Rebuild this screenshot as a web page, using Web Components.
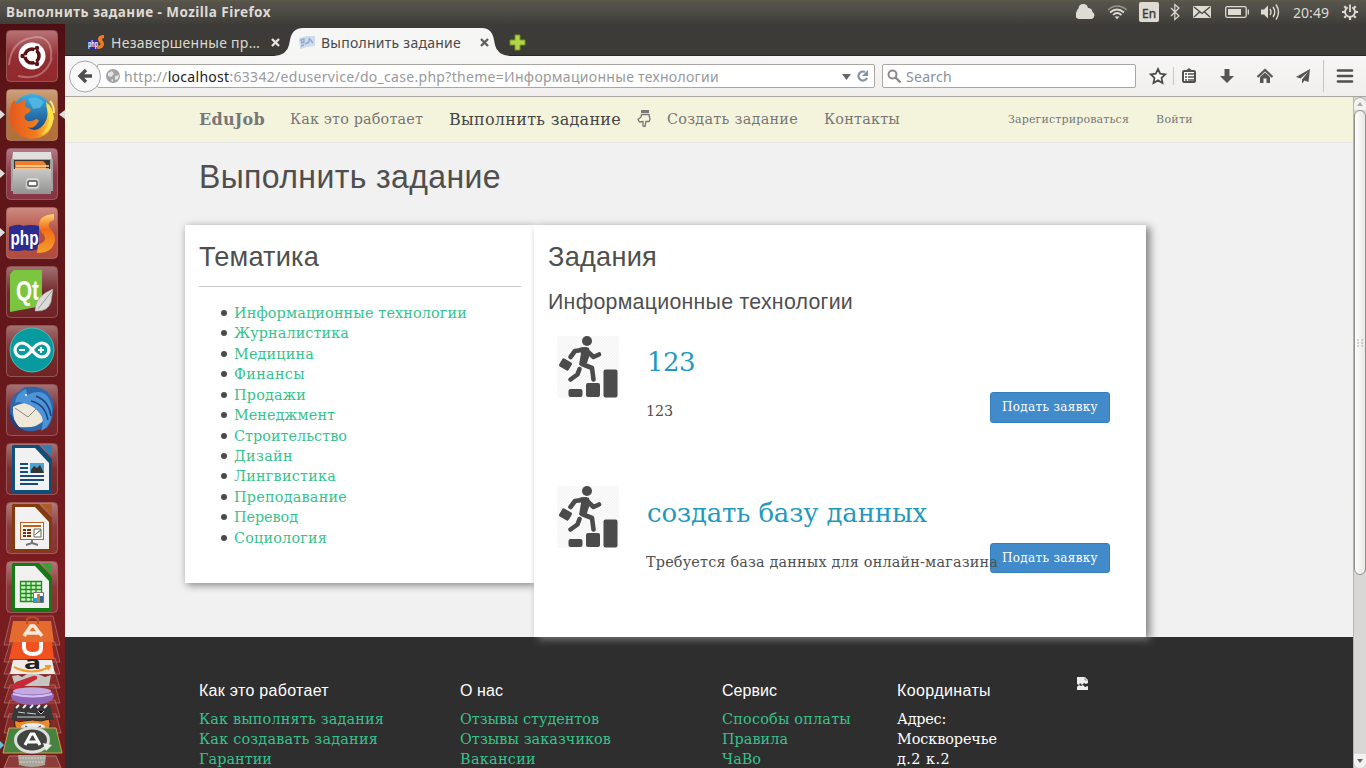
<!DOCTYPE html>
<html lang="ru">
<head>
<meta charset="utf-8">
<title>Выполнить задание</title>
<style>
html,body{margin:0;height:100%;overflow:hidden;background:#f1f1f1}
</style>
</head>
<body>
<desk-screen></desk-screen>
<script>
const define=(name,html,setup)=>customElements.define(name,class extends HTMLElement{
  connectedCallback(){
    if(this.shadowRoot)return;
    const t=document.createElement('template');
    t.innerHTML=typeof html==='function'?html(this):html;
    this.attachShadow({mode:'open'}).append(t.content.cloneNode(true));
    if(setup)setup(this);
  }
});

define('desk-screen',`<style>
:host{display:grid;width:1366px;height:768px;grid-template:24px 744px/65px 1301px;font-family:"Noto Sans",sans-serif;overflow:hidden}
system-bar{grid-column:1/3}
</style><system-bar></system-bar><app-launcher></app-launcher><browser-window></browser-window>`);

define('system-bar',`<style>
:host{display:flex;align-items:center;height:24px;background:linear-gradient(#5e5b4c 0,#56534a 2px,#504e48 40%,#3f3d38);color:#dfdbd2;font-size:14px;box-sizing:border-box;padding-left:6px}
.title{font-weight:700;font-size:13.5px}
svg{display:block;margin-left:auto}
.clock{margin:0 13px 0 11px}
.gear{margin:0 8px 0 0}
</style>
<fit-text class="title" w="265">Выполнить задание - Mozilla Firefox</fit-text>
<svg width="206" height="24" viewBox="1076 0 206 24" fill="none" stroke="#dfdbd2" stroke-width="1.3">
<path d="M1079.500 19a4 4 0 0 1-3-7 4.500 4.500 0 0 1 2-3.500 4.800 4.800 0 0 1 9.500-.5 4.600 4.600 0 0 1 4.500 4 3.800 3.800 0 0 1-1 7z" fill="#dfdbd2" stroke="none"/>
<path d="M1108 10Q1117 2 1127 10" opacity=".5"/><path d="M1110 12.500q7-6 14 0M1113 15q4-4 8.500 0" stroke-width="1.700"/><path d="M1114.500 16.500h5l-2.500 2.700z" fill="#dfdbd2" stroke="none"/>
<rect x="1139" y="2" width="20" height="20" rx="2" fill="#dfdbd2" stroke="none"/>
<text x="1142" y="17.500" textLength="14" lengthAdjust="spacingAndGlyphs" font-size="13" fill="#3c3b37" stroke="#3c3b37" stroke-width=".4" font-family="Noto Sans">En</text>
<path d="M1171 8l8 8-4.200 3.500v-15l4.200 3.500-8 8" stroke-width="1.200"/>
<rect x="1193" y="6" width="18" height="12" rx="1" fill="#dfdbd2" stroke="none"/><path d="M1194 7l8 6.500 8-6.500M1194 17l5.500-5M1210 17l-5.500-5" stroke="#47453f" stroke-width="1.300"/>
<rect x="1225.700" y="6.700" width="20.500" height="10.600" rx="1.500"/><rect x="1228" y="9" width="13" height="6" fill="#dfdbd2" stroke="none"/><path d="M1248.300 9.500v5"/>
<path d="M1261 9.500h3l4-4v13l-4-4h-3z" fill="#dfdbd2" stroke="none"/><path d="M1270 9q2 3 0 6M1273 7q3.600 5 0 10M1276 4.500q5 7.500 0 15" stroke-width="1.400"/>
</svg>
<fit-text class="clock" w="36">20:49</fit-text>
<svg class="gear" width="16" height="16" viewBox="-8 -8 16 16" fill="none" stroke="#dfdbd2"><path d="M-2.300-4.600a5 5 0 1 0 4.600 0" stroke-width="1.900"/><path d="M0-7.500V0" stroke-width="1.800"/><path d="M4 4l1.700 1.700M-4 4l-1.700 1.700M5 0h3M-5 0h-3M0 5v3M-4-4l-1.700-1.700M4-4l1.700-1.700" stroke-width="2.200"/></svg>`);

const sheet=(dark,light)=>`<path d="M6 3.500q0-1.500 1.500-1.500H33l13 14v32.500q0 1.500-1.500 1.500h-37Q6 50 6 48.500z" fill="${dark}"/><path d="M35 2h9.500q1.500 0 1.500 1.500V13.500z" fill="${light}"/><path d="M9 5h20l14 15v27H9z" fill="#f1f1f1"/>`;
const glyph={
ubuntu:`<g fill="none" stroke="#fff" stroke-opacity=".3" stroke-width="2"><path d="M3 35q2-26 28-28 16 1 14 22M12 46q26 6 34-18"/></g><circle cx="26" cy="26" r="13.500" fill="#fff"/><circle cx="26" cy="26" r="7" fill="none" stroke="#5b1217" stroke-width="3.600"/><path d="M26 26L13 26M26 26l7-12M26 26l7 12" stroke="#fff" stroke-width="1.600"/><g fill="#5b1217"><circle cx="16.500" cy="26" r="2.200"/><circle cx="31" cy="18" r="2.200"/><circle cx="31" cy="34" r="2.200"/></g><circle cx="26" cy="26" r="5" fill="#fff"/>`,
firefox:`<circle cx="26" cy="25" r="20" fill="url(#ffb)"/><path d="M22 10q8-4 16 3l-4 6-7 1z" fill="#5dc0ea" opacity=".7"/><path d="M4 22q1-9 5-11 0 2 2 4 4-4 9-4-2 3-1 7l6 2q-1 4-5 5-3 3 0 6 4 3 10-1 4 1 2 3-4 8-11 5 9 7 17-3 6-8 2-19 8 7 6 20-4 13-21 14Q8 47 4 32z" fill="url(#ffo)"/><path d="M40 13q7 5 8 16-2 12-13 17 9-9 8-17z" fill="#ffe14a"/><path d="M44 12q4 4 4 12" stroke="#ffe36a" stroke-width="2" fill="none"/>`,
files:`<path d="M7 4h38l1 9H6z" fill="#dfdfdd"/><path d="M5 11h42v32H5z" fill="#a3a3a1"/><path d="M8 12h36v12H8z" fill="#34322f"/><path d="M9 13h28l3 3v7H9z" fill="#ef7c29"/><path d="M10 18h33M9 21h34" stroke="#ffd6a4" stroke-width="1.500"/><path d="M7 21h38v25H7z" fill="url(#metal)"/><rect x="20" y="30" width="13" height="11" rx="2.500" fill="#ddd" stroke="#bdbdbd"/><rect x="22" y="33" width="9" height="5" rx="1" fill="#fff" stroke="#4d4d4d" stroke-width="1.400"/>`,
php:`<path d="M3 20q10-4 14-1 8-2 16 0v23q-8 3-14 1-8 2-16 0z" fill="#2b2c8e"/><text x="4.500" y="37.500" font-family="Liberation Sans" font-size="21" font-weight="700" fill="#fff" textLength="28" lengthAdjust="spacingAndGlyphs">php</text><path d="M48 7Q33 8 33 18q0 5 5 10 4 6-6 10l-1 8q17 0 18-14 0-6-6-12-2-5 5-7z" fill="url(#sun)"/>`,
qt:`<path d="M4 8l4-4h28v36l-32 6z" fill="#7cc63f"/><text x="10" y="34" font-family="Liberation Sans" font-size="28" font-weight="700" fill="#fff" textLength="23" lengthAdjust="spacingAndGlyphs">Qt</text><path d="M47 23q-18 7-18 22 13 1 16-9z" fill="#dadad8" stroke="#999" stroke-width=".6"/><path d="M46 25L32 43" stroke="#999"/>`,
arduino:`<circle cx="26" cy="25" r="22" fill="#079ba0" stroke="#4bbcbf"/><path d="M26 25q-5-7-10-7a7 7 0 0 0 0 14q5 0 10-7 5-7 10-7a7 7 0 0 1 0 14q-5 0-10-7z" fill="none" stroke="#fff" stroke-width="3.200"/><path d="M13 25h6M32 25h6M35 22v6" stroke="#fff" stroke-width="1.800"/>`,
bird:`<path d="M4 28Q4 11 14 7q4-5 8-4 20-2 25 15 2 17-6 26l-9 2q-12 4-20-4Q3 37 4 28z" fill="#2c69ab"/><path d="M7 23q11-6 23-4l8 17q-7 9-25 7-7-7-6-20z" fill="#eee8da"/><path d="M9 24l13 9 12-12" fill="none" stroke="#8d877d"/><path d="M9 19q1-10 11-14l1 6q14-7 21 2 6 10 3 22-3 9-10 12 3-7 1-14-7-13-24-15z" fill="#4c94d6"/><path d="M25 17q14 3 17 19M30 12q13 5 15 20M10 43q-5-5-6-13 6 12 12 17z" fill="none" stroke="#1a4380" stroke-width="1.500"/><circle cx="20" cy="11" r="1" fill="#fff"/>`,
writer:sheet('#0f507b','#2a81b9')+`<path d="M14 21h8M14 25h8M14 29h8M14 33h24M14 37h24M14 41h18" stroke="#174d77" stroke-width="1.800"/><path d="M24 20h14v10H24z" fill="#4ba3d2"/><path d="M25 30v-3l3-4 3 2 3-3 4 8z" fill="#333"/>`,
impress:sheet('#833b0d','#af5b24')+`<rect x="14.500" y="20.500" width="23" height="17" fill="#fff8ed" stroke="#b96027"/><path d="M17 24h18" stroke="#be602b" stroke-width="2"/><path d="M17 28h3M17 31h3M17 34h3M21 28h4M21 31h4M21 34h4" stroke="#792f17" stroke-width="2"/><path d="M28 27h7v8h-7z" fill="#fff" stroke="#666"/><path d="M29 33l3-3 3-2" stroke="#29912e"/><path d="M26 37v4l-6 2M26 41l6 2" fill="none" stroke="#777" stroke-width="2"/>`,
calc:sheet('#137b13','#38a238')+`<path d="M14 20h22v21H14z" fill="#d1f2c9"/><path d="M14.500 20.500h21v20h-21zM14 24.500h22M14 28.500h22M14 32.500h22M14 36.500h22M20 20v21M25 20v21M30 20v21" fill="none" stroke="#199117" stroke-width="1.300"/><path d="M27.500 31.500h10v10h-10z" fill="#fff" stroke="#777"/><path d="M28 37h3v4h-3z" fill="#17a6df"/><path d="M31 33h3v8h-3z" fill="#df782b"/><path d="M34 35h3v6h-3z" fill="#246c9b"/>`};

define('launcher-item',el=>`<style>:host{display:block;width:65px;height:59px}svg{display:block;width:65px;height:59px}</style>
<svg viewBox="0 0 65 59"><defs>
<linearGradient id="ffb" x2="0" y2="1"><stop stop-color="#3ab0e3"/><stop offset="1" stop-color="#153d7a"/></linearGradient>
<linearGradient id="ffo"><stop stop-color="#e4591d"/><stop offset=".6" stop-color="#f17a20"/><stop offset="1" stop-color="#ffd83e"/></linearGradient>
<linearGradient id="metal" x2="0" y2="1"><stop stop-color="#c8c8c6"/><stop offset="1" stop-color="#939391"/></linearGradient>
<linearGradient id="sun" x2="0" y2="1"><stop stop-color="#ffd071"/><stop offset=".4" stop-color="#f36c18"/><stop offset="1" stop-color="#f5a229"/></linearGradient>
<linearGradient id="sheen" x2="0" y2="1"><stop stop-color="#fff" stop-opacity=".36"/><stop offset=".5" stop-color="#fff" stop-opacity=".05"/><stop offset="1" stop-color="#fff" stop-opacity=".02"/></linearGradient></defs>
<rect x="6.500" y=".5" width="51" height="51" rx="4" fill="${el.getAttribute('tint')}" stroke="#fff" stroke-opacity=".25"/><rect x="7" y="1" width="50" height="50" rx="4" fill="url(#sheen)"/>
<g transform="translate(6 0)">${glyph[el.getAttribute('icon')]}</g>
${el.hasAttribute('run')?'<path d="M0 21l5 4.500-5 4.500z" fill="#ddd"/>':''}${el.hasAttribute('focused')?'<path d="M65 21l-6 4.500 6 4.500z" fill="#ddd"/>':''}</svg>`);

define('launcher-stack',`<style>:host{display:block}svg{display:block}</style>
<svg width="65" height="153" viewBox="0 615 65 153">
<g fill="#a23b35" fill-opacity=".45" stroke="#fff" stroke-opacity=".25"><path d="M11 616h42l7 29H4z"/><path d="M10 642h45l5 20H4z"/><path d="M10 658h45l5 16H4z"/><path d="M10 672h45l5 16H4z"/><path d="M10 685h45l5 18H4z"/><path d="M10 700h45l5 17H4z"/><path d="M9 714h47l5 19H4z"/></g>
<path d="M13 621h38l3 21H9z" fill="#e36b2f"/><path d="M27 624v-5q5-4 11 0v5" fill="none" stroke="#c04e21" stroke-width="2"/><path d="M24 636l7-10h3l8 10M26 633h14" fill="none" stroke="#f9e8dc" stroke-width="3.500"/>
<path d="M13 642h39l2 17H9z" fill="#ef511f"/><path d="M24 642v6q1 6 9 6t8-6v-6" fill="none" stroke="#fff" stroke-width="4"/>
<path d="M13 660h39l3 14H10z" fill="#ececea"/><text x="24" y="669" font-family="Noto Sans" font-weight="700" font-size="17" fill="#222" textLength="17" lengthAdjust="spacingAndGlyphs">a</text><path d="M14 667q18 9 35 0M45 666h5l-2 4" fill="none" stroke="#f49a28" stroke-width="2"/>
<path d="M12 676l6-1 4 2 5-3h11l7 3 6-2-2 11H15z" fill="#c5c5c2"/><path d="M11 688l5-6 17-6q5-1 4 3L17 690z" fill="#c7293a"/>
<ellipse cx="32.500" cy="696" rx="21.500" ry="9" fill="#9168b8"/><ellipse cx="32" cy="691" rx="19" ry="3.500" fill="#c3aadf"/><path d="M13 694q20 5 39 0" stroke="#d5bdf0" fill="none" stroke-width="2"/>
<path d="M15 705h35l4 15H11z" fill="#36383a"/><path d="M16 708l3-3M23 708l3-3M30 708l3-3M37 708l3-3M44 708l3-3" stroke="#eee" stroke-width="2"/><path d="M18 712l7 1M27 713l9 1M38 711l3 3 3-3M17 717h28" stroke="#ccc"/>
<path d="M15 720q5 3 8 1 10-2 18 0l8-2q4 10-5 13-11 5-24 0-7-5-5-12z" fill="#ea8b2e" stroke="#222"/><ellipse cx="33" cy="727" rx="12" ry="4" fill="#eee"/><path d="M25 726q8 5 16 0" fill="none" stroke="#333"/>
<path d="M9 728h47l6 25H3z" fill="#478340" stroke="#d79a54"/><ellipse cx="32" cy="740" rx="16.500" ry="12" fill="#41443f" stroke="#ddd" stroke-width="3"/><path d="M25 745l6-11h3l6 11M27 742h11" fill="none" stroke="#fff" stroke-width="3"/><path d="M43 743l9 2-6 6z" fill="#eee"/>
<path d="M9 756h47l5 12H4z" fill="#a55a53" fill-opacity=".55" stroke="#b7736b"/><path d="M18 755h28l-1 10q-13 4-26 0z" fill="#aaa79d"/><path d="M19 758h26M20 762h24" stroke="#d5d4ca" stroke-dasharray="2 1"/>
<path d="M0 741l4 4-4 4z" fill="#63bddd"/></svg>`);

define('app-launcher',`<style>:host{display:flex;flex-direction:column;height:744px;overflow:hidden;background:linear-gradient(#4e0e12,#5d1517 8%,#63171a 40%,#7b1d20 75%,#6d1c1c);padding-top:6px;box-sizing:border-box}
launcher-stack{margin-top:-5px}</style>
<launcher-item icon="ubuntu" tint="#8f2428"></launcher-item><launcher-item icon="firefox" tint="#b06c35" run focused></launcher-item><launcher-item icon="files" tint="#853040" run></launcher-item><launcher-item icon="php" tint="#b0483a" run></launcher-item><launcher-item icon="qt" tint="#6c2022"></launcher-item><launcher-item icon="arduino" tint="#702020"></launcher-item><launcher-item icon="bird" tint="#712027"></launcher-item><launcher-item icon="writer" tint="#732427"></launcher-item><launcher-item icon="impress" tint="#853031"></launcher-item><launcher-item icon="calc" tint="#842d2e"></launcher-item><launcher-stack></launcher-stack>`);

define('browser-window',`<style>:host{display:grid;grid-template:32px 41px 671px/1288px 13px}tab-strip,tool-bar{grid-column:1/3}</style>
<tab-strip></tab-strip><tool-bar></tool-bar><edu-page></edu-page><scroll-track></scroll-track>`);

define('tab-strip',`<style>
:host{display:flex;height:32px;background:#3c3b37;box-shadow:inset 0 -1px #292825;font-size:14px}
.old{display:flex;align-items:center;width:215px;padding:4px 0 0 23px;box-sizing:border-box;color:#dcd8cf}
.old fit-text{margin:0 11px 0 7px}
.tab{display:grid;width:226px;height:32px}
.tab>*{grid-area:1/1}
.face{display:flex;align-items:center;padding:4px 0 0 19px;color:#4a4a4a}
.face fit-text{margin:0 19px 0 6px}
.plus{margin:10px 0 0 3px}
</style>
<div class="old"><svg width="16" height="16"><path d="M0 6h10v9H0z" fill="#2a2fa0"/><text x="0" y="13" font-family="Liberation Sans" font-size="9" font-weight="700" fill="#fff" textLength="10" lengthAdjust="spacingAndGlyphs">php</text><path d="M16 1q-6 0-6 4 0 2 2 4t-3 3v3q7 0 7-5 0-2-2-4 0-2 2-2z" fill="#f17b20"/></svg>
<fit-text w="149">Незавершенные пр…</fit-text><svg width="9" height="9"><path d="M1 1l7 7M8 1L1 8" stroke="#e8e4dc" stroke-width="2.400"/></svg></div>
<div class="tab"><svg width="236" height="32" style="overflow:visible"><path d="M-6 32Q7 31 9 21l1-5Q12 4 23 4H202q10 0 12 12l1 5q2 10 15 11z" fill="#f6f6f5"/></svg>
<div class="face"><svg width="16" height="14"><path d="M0 3l8-2 8 0v10l-8 1-7 2z" fill="#cddbea"/><path d="M2 5l3-1v3l-2 1zM6 9l4-2V4M10 3l4 5M2 11l3-1" fill="none" stroke="#8fabd2" stroke-width="1.400"/></svg>
<fit-text w="140">Выполнить задание</fit-text><svg width="9" height="9"><path d="M1 1l7 7M8 1L1 8" stroke="#606060" stroke-width="2.400"/></svg></div></div>
<svg class="plus" width="18" height="17"><path d="M6 1h5v5h5v5h-5v5H6v-5H1V6h5z" fill="#b4d645" stroke="#71952b"/></svg>`);

define('tool-bar',`<style>
:host{display:flex;align-items:center;height:41px;background:linear-gradient(#f6f6f5,#f1efee);border-bottom:1px solid #aaa7a2;box-sizing:border-box;font-size:14px;color:#999}
.back{z-index:1;margin-left:4px}
.box{display:flex;align-items:center;height:24px;box-sizing:border-box;border:1px solid #aaa7a3;border-radius:2px;background:#fff}
.url{width:778px;margin-left:-5px;padding-left:8px}
.url fit-text{margin-left:4px}
b{font-weight:400;color:#222}
.drop{margin-left:123px}
.search{margin-left:7px;width:254px;padding-left:4px}
.search fit-text{margin-left:4px;color:#888f98}
.icons{margin-left:8px}
</style>
<svg class="back" width="33" height="33"><circle cx="16" cy="16.500" r="15.500" fill="#f8f8f8" stroke="#a2a8ad"/><path d="M17 10l-6 6 6 6M11.500 16H23" fill="none" stroke="#4e4e4e" stroke-width="3.400"/></svg>
<div class="box url"><svg width="14" height="14"><circle cx="7" cy="7" r="7" fill="#a3a3a3"/><path d="M2 4l4-2 2 3-3 3-3-1zM9 7l4-1-1 4-3 1zM5 11l2-1v3z" fill="#e4e4e4"/></svg><fit-text w="595">http://<b>localhost</b>:63342/eduservice/do_case.php?theme=Информационные технологии</fit-text>
<svg class="drop" width="32" height="14"><path d="M0 5h9l-4.500 6z" fill="#666"/><path d="M23 3a4.500 4.500 0 1 0 2 6" fill="none" stroke="#8393a5" stroke-width="2.200"/><path d="M26 1v6h-6z" fill="#8393a5"/></svg></div>
<div class="box search"><svg width="15" height="15"><circle cx="5.500" cy="5.500" r="4" fill="none" stroke="#8a8a8a" stroke-width="2"/><path d="M8.500 8.500l5 5" stroke="#8a8a8a" stroke-width="2.400"/></svg><fit-text w="46">Search</fit-text></div>
<svg class="icons" width="222" height="40" viewBox="1144 56 222 40" fill="#555">
<path d="M1158 69l2.200 4.700 5 .6-3.700 3.500 1 5.200-4.500-2.600-4.500 2.600 1-5.200-3.700-3.500 5-.6z" fill="#fff" stroke="#4c4c4c" stroke-width="1.800"/>
<path d="M1173.500 67v18" stroke="#c0c7cf"/>
<rect x="1183" y="71" width="12" height="11" rx="1" fill="#fff" stroke="#505050" stroke-width="2"/><path d="M1185 71l4-3 4 3z"/><path d="M1185 74h2M1188 74h6M1185 77h2M1188 77h6M1185 80h2M1188 80h6" stroke="#505050" stroke-width="1.300"/>
<path d="M1224.500 69h5v7h4.500l-7 7-7-7h4.500z"/>
<path d="M1257.500 77l7.500-7 7.500 7" fill="none" stroke="#555" stroke-width="2.200"/><path d="M1260 77l5-4.500 5 4.500v6h-3.500v-4.500h-3v4.500h-3.500z"/>
<path d="M1310 69l-14 8 4.500 1.500L1308 72l-6 7.500v4l2.500-3 4 1.500z"/>
<path d="M1323.500 60v32" stroke="#bdc5ce"/><path d="M1338 70.500h14M1338 76h14M1338 81.500h14" stroke="#505050" stroke-width="2.700" stroke-linecap="round"/></svg>`);

define('scroll-track',`<style>:host{display:flex;flex-direction:column;height:671px;background:#d9d7d5;border-left:1px solid #b8b5b2;box-sizing:border-box;overflow:hidden}
.up,.down{height:16px;background:#f3f2f1;display:flex;justify-content:center;align-items:center;border-radius:0 0 6px 6px}
.up{height:13px;border-radius:6px 6px 0 0;box-shadow:inset 0 1px #aaa}
.thumb{height:465px;box-sizing:border-box;border:1px solid #93908c;border-radius:6px;background:linear-gradient(90deg,#fff,#e8e7e5);display:flex;align-items:center;justify-content:center}
.down{margin-top:auto;height:14px}
</style><div class="up"><svg width="6" height="4"><path d="M0 4l3-4 3 4z" fill="#aaa"/></svg></div><div class="thumb"><svg width="6" height="8"><path d="M0 1h2M4 1h2M0 4h2M4 4h2M0 7h2M4 7h2" stroke="#aaa"/></svg></div><div class="down"><svg width="6" height="4"><path d="M0 0h6L3 4z" fill="#666"/></svg></div>`);

define('edu-page',`<style>
:host{display:block;width:1288px;height:671px;overflow:hidden;background:#f1f1f1;color:#4f4f4f;font-family:"DejaVu Serif",serif}
h1{margin:0;height:82px;padding:14px 0 0 134px;box-sizing:border-box;font:400 33px/40px "Liberation Sans",sans-serif}
.cols{display:flex;align-items:flex-start;height:412px;padding-left:120px;position:relative;z-index:1}
theme-list{box-shadow:2px 2px 8px #808080}
task-list{box-shadow:4px 2px 8px #808080;clip-path:inset(-10px -16px -16px -4px)}
</style><edu-nav></edu-nav><h1><fit-text w="302" squeeze=".97">Выполнить задание</fit-text></h1>
<div class="cols"><theme-list></theme-list><task-list></task-list></div><edu-footer></edu-footer>`);

define('edu-nav',`<style>:host{display:flex;align-items:center;height:46px;box-sizing:border-box;border-bottom:1px solid #e6e6e6;background:#f4f4dc;padding:0 0 1px 134px;font-size:14.400px;color:#777}
.small{font-size:11px;position:relative;top:.5px}
</style><fit-text w="66" style="font-weight:700;font-size:16px">EduJob</fit-text><fit-text w="133" style="margin-left:25px">Как это работает</fit-text><fit-text w="172" style="margin:0 16px 0 26px;font-size:16px;color:#444">Выполнить задание</fit-text>
<svg width="14" height="18" viewBox="0 0 14 18"><path d="M4 0h8v3H4z" fill="#777"/><path d="M4.500 4.500h7.500l1 5-1 2H9L8 16.500 6 16V11.500l-3.500.500-1.500-2.500L4 7z" fill="none" stroke="#777" stroke-width="1.300"/></svg>
<fit-text w="131" style="margin:0 26px 0 16px">Создать задание</fit-text><fit-text w="76">Контакты</fit-text><fit-text class="small" w="121" style="margin:0 27px 0 108px">Зарегистрироваться</fit-text><fit-text class="small" w="37">Войти</fit-text>`);

define('theme-list',()=>`<style>:host{display:block;width:349px;height:358px;box-sizing:border-box;background:#fff;padding:12px 13px 0 14px}
h2{margin:0;height:50px;box-sizing:border-box;border-bottom:1px solid #c8c8c8;font:400 28px/40px "Liberation Sans",sans-serif}
ul{margin:15.800px 0 0;padding:0;list-style:none;font-size:14.400px}
li{display:flex;align-items:center;height:20.430px}
li::before{content:"";width:6px;height:6px;margin:0 7px 0 22px;border-radius:50%;background:#4b4b4b}
a{color:#37c28d}
</style><h2><fit-text w="120" squeeze=".97">Тематика</fit-text></h2><ul>${[['Информационные технологии',233],['Журналистика',115],['Медицина',80],['Финансы',71],['Продажи',72],['Менеджмент',101],['Строительство',113],['Дизайн',59],['Лингвистика',102],['Преподавание',113],['Перевод',64],['Социология',93]].map(([t,w])=>`<li><a><fit-text w="${w}">${t}</fit-text></a></li>`).join('')}</ul>`);

define('task-list',`<style>:host{display:block;width:612px;height:412px;box-sizing:border-box;background:#fff;padding:12px 14px 0}
h2{margin:0;font:400 28px/40px "Liberation Sans",sans-serif}
h3{margin:9px 0 0;height:50px;font:400 22px/32px "Liberation Sans",sans-serif}
</style><h2><fit-text w="109" squeeze=".97">Задания</fit-text></h2><h3><fit-text w="305" squeeze=".97">Информационные технологии</fit-text></h3>
<task-card tw="48" dw="27" heading="123" text="123"></task-card><task-card tw="280" dw="352" heading="создать базу данных" text="Требуется база данных для онлайн-магазина"></task-card>`);

define('task-card',el=>`<style>:host{display:grid;grid-template:50px 50px/98px 344px 120px;height:150.500px}
svg{grid-area:1/1/3/2;margin:-.3px 0 0 9px}
.t{grid-area:1/2/2/4;font-size:26px;line-height:34px;color:#2299bd;padding:9px 0 0 1px}
.d{grid-area:2/2/3/4;z-index:1;font-size:14.400px;line-height:20px;padding-top:15px}
button{grid-area:2/3/3/4;margin:6px 0 0;width:120px;height:30.500px;padding:0;border:1px solid #357ebd;border-radius:3px;background:#428bca;color:#fff;font:12px "DejaVu Serif",serif}
</style><svg width="62" height="62" viewBox="0 0 62 62"><defs><pattern id="hatch" width="3" height="3" patternUnits="userSpaceOnUse"><path d="M0 3L3 0" stroke="#ededed" stroke-width=".6"/></pattern></defs><rect width="62" height="62" fill="#fbfbfb"/><rect width="62" height="62" fill="url(#hatch)"/>
<g fill="#4b4b4b"><circle cx="30" cy="5" r="5"/><rect x="11.500" y="53" width="14" height="8" rx="2"/><rect x="29" y="47" width="14" height="14" rx="2"/><rect x="46.500" y="33.500" width="14" height="28" rx="2"/><rect x="3" y="24" width="11" height="9" rx="1.500" transform="rotate(30 8.500 28.500)"/><path d="M22 12q6-2 10 0l1 6-3 9-8 2 2-12z"/></g><g fill="none" stroke="#4b4b4b" stroke-width="4.600" stroke-linecap="round" stroke-linejoin="round"><path d="M25 14l-7 1-4.500 6M29 14l7.500 7 5.500-2.500M25 28l10 4 1.500 11.500M22.500 33l-2 5.500-7 5"/></g></svg>
<div class="t"><fit-text w="${el.getAttribute('tw')}">${el.getAttribute('heading')}</fit-text></div><button><fit-text w="96">Подать заявку</fit-text></button><div class="d"><fit-text w="${el.getAttribute('dw')}">${el.getAttribute('text')}</fit-text></div>`);

define('edu-footer',`<style>:host{display:grid;grid-template-columns:261px 262px 175px 180px 30px;height:131px;box-sizing:border-box;background:#2e2e2e;padding:40px 0 0 134px;overflow:hidden}
svg{display:block}</style>
<footer-column items="Как выполнять задания:185|Как создавать задания:179|Гарантии:73"><fit-text w="130">Как это работает</fit-text></footer-column>
<footer-column items="Отзывы студентов:139|Отзывы заказчиков:151|Вакансии:76"><fit-text w="43">О нас</fit-text></footer-column>
<footer-column items="Способы оплаты:129|Правила:66|ЧаВо:39"><fit-text w="55">Сервис</fit-text></footer-column>
<footer-column plain items="Адрес;:49|Москворечье:100|д.2 к.2:53"><fit-text w="94">Координаты</fit-text></footer-column>
<svg width="11" height="13"><path d="M0 0h8l3 3v3l-2 1-2-1-2 2-2-2-1 2-2-1zM0 10l2-2 2 1 2-1 2 2 3-1v4H0z" fill="#eee"/><path d="M8 0v3h3" fill="none" stroke="#999"/></svg>`);

define('footer-column',el=>`<style>:host{display:block;color:#fff;font-size:14.400px}
h4{margin:0;height:32px;font:400 16px/27px "Liberation Sans",sans-serif}
div{height:20px;line-height:20px;color:${el.hasAttribute('plain')?'#fff':'#37c28d'}}
</style><h4><slot></slot></h4>${el.getAttribute('items').split('|').map(s=>{const[t,w]=s.split(':');return`<div><fit-text w="${w}">${t.replace(';',':')}</fit-text></div>`}).join('')}`);

/* Tracks its text so that the line takes exactly the width in "w"; "squeeze" narrows the letters. */
define('fit-text','<style>:host{display:inline-block;white-space:nowrap;flex:none;vertical-align:top}span{display:inline-block;transform-origin:0 50%}</style><span><slot></slot></span>',el=>{
  const span=el.shadowRoot.querySelector('span'),w=+el.getAttribute('w'),k=+(el.getAttribute('squeeze')||1);
  const n=[...el.textContent].length;
  const natural=span.getBoundingClientRect().width;
  span.style.letterSpacing=(w/k-natural)/n+'px';
  if(k!==1)span.style.transform=`scaleX(${k})`;
  el.style.width=w+'px';
});
</script>
</body>
</html>
